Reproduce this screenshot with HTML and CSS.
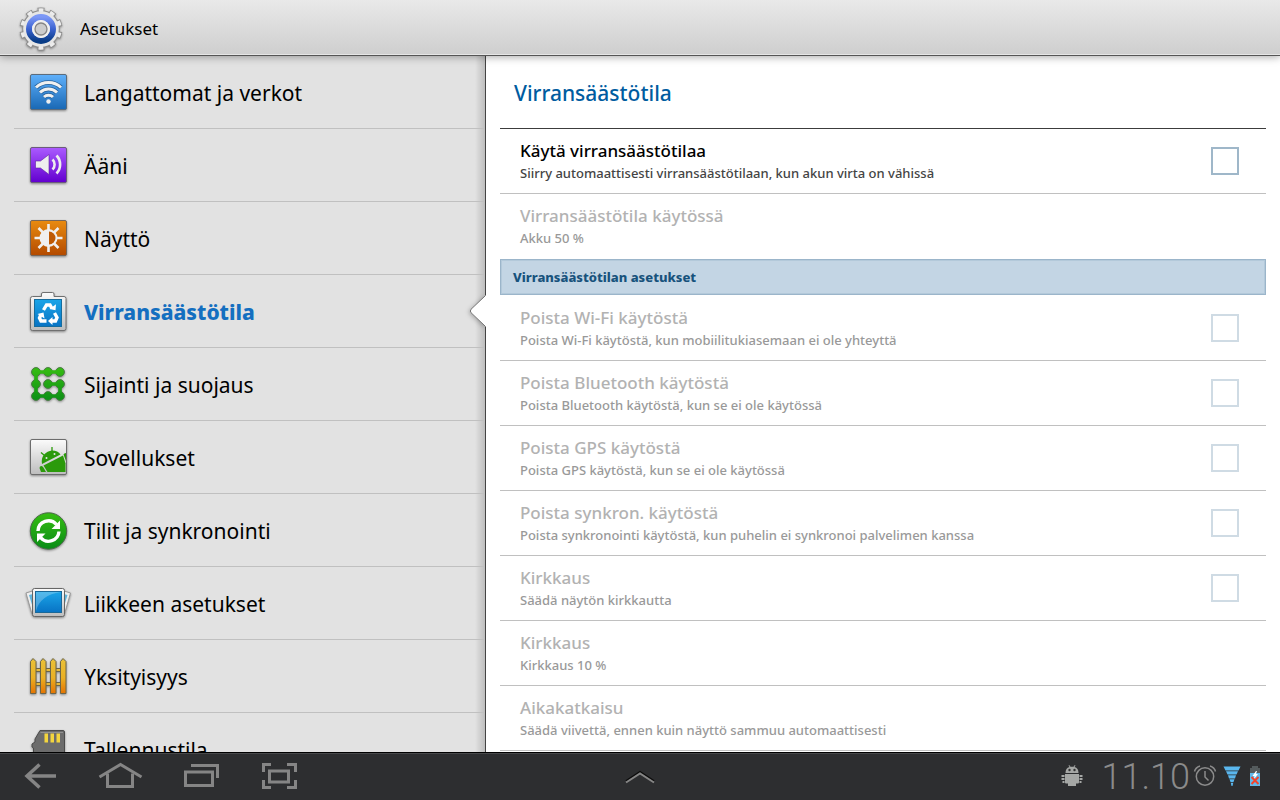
FILE: index.html
```
<!DOCTYPE html>
<html lang="fi">
<head>
  <meta charset="UTF-8" />
  <meta name="viewport" content="width=device-width, initial-scale=1.0"/>
  <title>Asetukset</title>
  <link rel="stylesheet" href="styles.css">
</head>
<body>

  <!-- Shared gradients -->
  <svg class="defs" width="0" height="0" aria-hidden="true">
    <defs>
      <linearGradient id="blue" x1="0" y1="0" x2="0" y2="1"><stop offset="0" stop-color="#5fb0fb"/><stop offset="1" stop-color="#1968b4"/></linearGradient>
      <linearGradient id="purple" x1="0" y1="0" x2="0" y2="1"><stop offset="0" stop-color="#ab5bff"/><stop offset="1" stop-color="#6200cf"/></linearGradient>
      <linearGradient id="orange" x1="0" y1="0" x2="0" y2="1"><stop offset="0" stop-color="#e98b10"/><stop offset="1" stop-color="#b34a00"/></linearGradient>
      <linearGradient id="green" gradientUnits="userSpaceOnUse" x1="0" y1="6" x2="0" y2="42"><stop offset="0" stop-color="#38bf12"/><stop offset="1" stop-color="#0a8d16"/></linearGradient>
      <linearGradient id="silver" x1="0" y1="0" x2="0" y2="1"><stop offset="0" stop-color="#fbfbfb"/><stop offset="1" stop-color="#bdbdbd"/></linearGradient>
      <linearGradient id="sky" x1="0" y1="0" x2="0" y2="1"><stop offset="0" stop-color="#1ba5e8"/><stop offset="1" stop-color="#0873c4"/></linearGradient>
      <linearGradient id="wood" gradientUnits="userSpaceOnUse" x1="0" y1="6" x2="0" y2="42"><stop offset="0" stop-color="#e9c23a"/><stop offset=".55" stop-color="#eab024"/><stop offset="1" stop-color="#e57200"/></linearGradient>
      <linearGradient id="ring" x1="0" y1="0" x2="0" y2="1"><stop offset="0" stop-color="#7c98f6"/><stop offset=".5" stop-color="#3b62d0"/><stop offset="1" stop-color="#083c86"/></linearGradient>
    </defs>
  </svg>

  <header class="topbar">
    <svg class="icon" viewBox="0 0 48 48" aria-hidden="true">
      <!-- ten teeth: dark outline first, light fill on top -->
      <g fill="none">
        <circle cx="24" cy="25" r="18.500" pathLength="20" stroke="#8c8c8c" stroke-width="6" stroke-dasharray="1.100 .9" transform="rotate(8.100 24 25)"/>
        <circle cx="24" cy="25" r="17.500" stroke="#8c8c8c" stroke-width="2.400"/>
        <circle cx="24" cy="25" r="18" pathLength="20" stroke="#ececec" stroke-width="5.400" stroke-dasharray=".8 1.200" transform="rotate(10.800 24 25)"/>
      </g>
      <circle cx="24" cy="25" r="17.800" fill="#e6e6e6"/>
      <circle cx="24" cy="25" r="12" fill="none" stroke="url(#ring)" stroke-width="6"/>
      <circle cx="24" cy="25" r="9" fill="#f0f0f0"/>
      <circle cx="24" cy="25" r="6" fill="#ccc" stroke="#858585" stroke-width="1.300"/>
    </svg>
    <h1>Asetukset</h1>
  </header>

  <main class="panes">
    <!-- Categories -->
    <nav class="sidebar">
      <a class="item" href="#">
        <svg class="icon" viewBox="0 0 48 48" aria-hidden="true">
          <rect x="6.500" y="6.500" width="36" height="35" rx="1.500" fill="url(#blue)" stroke="#5c6c7c"/>
          <g fill="none" stroke="#245f99" stroke-width="4.600"><path d="M12 19.500a18 18 0 0 1 25 0M16 24.500a12 12 0 0 1 17 0M20 29a6.500 6.500 0 0 1 9 0"/></g>
          <g fill="none" stroke="#f0f0f0" stroke-width="3"><path d="M12 19.500a18 18 0 0 1 25 0M16 24.500a12 12 0 0 1 17 0M20 29a6.500 6.500 0 0 1 9 0"/></g>
          <circle cx="24.500" cy="33.500" r="2.200" fill="#eee"/>
        </svg>
        <span>Langattomat ja verkot</span>
      </a>
      <a class="item" href="#">
        <svg class="icon" viewBox="0 0 48 48" aria-hidden="true">
          <rect x="6.500" y="6.500" width="36" height="35" rx="1.500" fill="url(#purple)" stroke="#6b5c7c"/>
          <path d="M11.500 20h5l8.500-6.500v20L16.500 27h-5z" fill="#eee" stroke="#5d20a0" stroke-width=".6"/>
          <g fill="none" stroke="#eee" stroke-width="2.600"><path d="M28.500 18.500a7 7 0 0 1 0 10M32.500 14.500a13 13 0 0 1 0 18"/></g>
        </svg>
        <span>Ääni</span>
      </a>
      <a class="item" href="#">
        <svg class="icon" viewBox="0 0 48 48" aria-hidden="true">
          <rect x="6.500" y="6.500" width="36" height="35" rx="1.500" fill="url(#orange)" stroke="#76665a"/>
          <path d="M24.500 10v28M10.500 24h28M14.500 14l20 20M34.500 14l-20 20" stroke="#f0f0f0" stroke-width="2.600"/>
          <circle cx="24.500" cy="24" r="9" fill="#f0f0f0"/>
          <path d="M25 17.500a6.500 6.500 0 0 1 0 13z" fill="#be5a05"/>
        </svg>
        <span>Näyttö</span>
      </a>
      <a class="item active" href="#" aria-current="page">
        <svg class="icon" viewBox="0 0 48 48" aria-hidden="true">
          <path d="M8.500 9.500h9V7q0-1.500 1.500-1.500h9.500Q30 5.500 30 7v2.500h10q2 0 2 2v30q0 2-2 2H8.500q-2 0-2-2v-30q0-2 2-2z" fill="url(#silver)" stroke="#707070"/>
          <rect x="10.500" y="12.500" width="27" height="27" fill="url(#sky)" stroke="#176d9d"/>
          <g fill="none" stroke="#fff" stroke-width="3.400">
            <path d="M19.500 23l3-5h3.500l2 3.500"/>
            <path d="M30.500 26l2.500 4.500-1.500 3.500H28"/>
            <path d="M22.500 34H17l-1.500-3 1.500-3.500"/>
          </g>
          <path d="M25.500 22l6 1.300.5-6zM28.500 30v8l-4.500-4zM13.500 27l6-1.500 1 6z" fill="#fff"/>
        </svg>
        <span>Virransäästötila</span>
        <svg class="pointer" viewBox="0 0 17 34" aria-hidden="true">
          <path d="M17 1L2 15q-1.500 2 0 4l15 14z" fill="#fff"/>
          <path d="M16.500 1.500L2 15.300q-1.300 1.700 0 3.400l14.500 13.800" fill="none" stroke="#707070"/>
        </svg>
      </a>
      <a class="item" href="#">
        <svg class="icon" viewBox="0 0 48 48" aria-hidden="true">
          <g fill="url(#green)" stroke="#4a7a45">
            <circle cx="12" cy="12" r="4.400"/><circle cx="24" cy="12" r="4.400"/><circle cx="36" cy="12" r="4.400"/>
            <circle cx="12" cy="24" r="4.400"/><circle cx="24" cy="24" r="4.400"/><circle cx="36" cy="24" r="4.400"/>
            <circle cx="12" cy="36" r="4.400"/><circle cx="24" cy="36" r="4.400"/><circle cx="36" cy="36" r="4.400"/>
          </g>
          <path d="M36 12H12v24h24V24H24" fill="none" stroke="url(#green)" stroke-width="3.600"/>
        </svg>
        <span>Sijainti ja suojaus</span>
      </a>
      <a class="item" href="#">
        <svg class="icon" viewBox="0 0 48 48" aria-hidden="true">
          <rect x="6.500" y="6.500" width="36" height="35" rx="1.500" fill="url(#silver)" stroke="#6c6c6c"/>
          <g fill="#2b9a0b">
            <path d="M18 31C16.500 23 22 18 28 17.500q6 0 8.500 4z"/>
            <path d="M19.500 32.500L39 22.500l2.500 8V39h-18z"/>
            <path d="M15.500 35q0-2 2-2 1.500 0 2.500 2.500l2 3.500h-5zM39.500 21.500q.5-1.500 2.500-1.500v8z"/>
          </g>
          <path d="M20.500 22.500L17 19.500M28 18v-4" stroke="#2b9a0b" stroke-width="1.300"/>
          <circle cx="22.500" cy="25" r="1" fill="#e4e4e4"/><circle cx="30.500" cy="21" r="1" fill="#e4e4e4"/>
        </svg>
        <span>Sovellukset</span>
      </a>
      <a class="item" href="#">
        <svg class="icon" viewBox="0 0 48 48" aria-hidden="true">
          <circle cx="24.500" cy="25" r="18.200" fill="url(#green)" stroke="#4b6a49"/>
          <g fill="none" stroke="#fff" stroke-width="3.400"><path d="M14 25a10.500 10.500 0 0 1 18.500-6.500M35 25.500a10.500 10.500 0 0 1-18.500 6"/></g>
          <path d="M36 14.500V23h-8.500zM13 36v-8.500h8.500z" fill="#fff"/>
        </svg>
        <span>Tilit ja synkronointi</span>
      </a>
      <a class="item" href="#">
        <svg class="icon" viewBox="0 0 48 48" aria-hidden="true">
          <path d="M2 14l8-2.500v23l-2 .5zM46.500 14l-8-2.500v23l2 .5z" fill="#eee" stroke="#999"/>
          <path d="M5 16l4-1v14zM43.500 16l-4-1v14z" fill="#62b5dc"/>
          <rect x="8.500" y="9.500" width="32" height="28" rx="2" fill="url(#silver)" stroke="#666"/>
          <rect x="11.500" y="12.500" width="26" height="21" fill="url(#sky)" stroke="#1a6898"/>
          <path d="M12 13h25q-21 3-25 19z" fill="#fff" opacity=".25"/>
        </svg>
        <span>Liikkeen asetukset</span>
      </a>
      <a class="item" href="#">
        <svg class="icon" viewBox="0 0 48 48" aria-hidden="true">
          <path d="M9 16.500h30v3H9zM9 30.500h30v3H9z" fill="#e6b93c" stroke="#6d6546"/>
          <g fill="url(#wood)" stroke="#6d6546">
            <path d="M6.500 9.500l2.500-3 3 3v32h-5.500zM16.500 9.500l2.500-3 3 3v32h-5.500zM26.500 9.500l2.500-3 3 3v32h-5.500zM36.500 9.500l2.500-3 3 3v32h-5.500z"/>
          </g>
        </svg>
        <span>Yksityisyys</span>
      </a>
      <a class="item" href="#">
        <svg class="icon" viewBox="0 0 48 48" aria-hidden="true">
          <path d="M16 5.500h23q1.500 0 1.500 1.500v35h-31V23l-1.500-1v-3l3-2v-3z" fill="#6c6c6c" stroke="#4b4b4b"/>
          <path d="M16.500 7.500H39" stroke="#919191"/>
          <path d="M20.500 8.500h3.500v9h-3.500zM26.500 8.500H30v9h-3.500zM32.500 8.500H36v9h-3.500z" fill="#f3d53e"/>
        </svg>
        <span>Tallennustila</span>
      </a>
    </nav>

    <!-- Power saving settings -->
    <section class="detail">
      <h2>Virransäästötila</h2>
      <label class="row">
        <span class="text"><span class="name">Käytä virransäästötilaa</span><span class="info">Siirry automaattisesti virransäästötilaan, kun akun virta on vähissä</span></span>
        <input type="checkbox">
      </label>
      <button class="row disabled last" disabled>
        <span class="text"><span class="name">Virransäästötila käytössä</span><span class="info">Akku 50 %</span></span>
      </button>

      <h3>Virransäästötilan asetukset</h3>
      <label class="row disabled">
        <span class="text"><span class="name">Poista Wi-Fi käytöstä</span><span class="info">Poista Wi-Fi käytöstä, kun mobiilitukiasemaan ei ole yhteyttä</span></span>
        <input type="checkbox" disabled>
      </label>
      <label class="row disabled">
        <span class="text"><span class="name">Poista Bluetooth käytöstä</span><span class="info">Poista Bluetooth käytöstä, kun se ei ole käytössä</span></span>
        <input type="checkbox" disabled>
      </label>
      <label class="row disabled">
        <span class="text"><span class="name">Poista GPS käytöstä</span><span class="info">Poista GPS käytöstä, kun se ei ole käytössä</span></span>
        <input type="checkbox" disabled>
      </label>
      <label class="row disabled">
        <span class="text"><span class="name">Poista synkron. käytöstä</span><span class="info">Poista synkronointi käytöstä, kun puhelin ei synkronoi palvelimen kanssa</span></span>
        <input type="checkbox" disabled>
      </label>
      <label class="row disabled">
        <span class="text"><span class="name">Kirkkaus</span><span class="info">Säädä näytön kirkkautta</span></span>
        <input type="checkbox" disabled>
      </label>
      <button class="row disabled" disabled>
        <span class="text"><span class="name">Kirkkaus</span><span class="info">Kirkkaus 10 %</span></span>
      </button>
      <button class="row disabled" disabled>
        <span class="text"><span class="name">Aikakatkaisu</span><span class="info">Säädä viivettä, ennen kuin näyttö sammuu automaattisesti</span></span>
      </button>
    </section>
  </main>

  <!-- System bar -->
  <footer class="sysbar">
    <div class="keys">
      <button aria-label="Takaisin">
        <svg width="48" height="32" viewBox="0 0 48 32"><path d="M40 16H11M23.500 4.500L11 16l12.500 11.500" fill="none" stroke="#858585" stroke-width="3.500"/></svg>
      </button>
      <button aria-label="Koti">
        <svg width="48" height="32" viewBox="0 0 48 32" fill="none" stroke="#858585" stroke-width="3"><path d="M3.500 17L24.500 4.500l21 12.500"/><path d="M11.500 13.500v13h25v-13"/></svg>
      </button>
      <button aria-label="Viimeisimmät">
        <svg width="48" height="32" viewBox="0 0 48 32" fill="none" stroke="#858585" stroke-width="3"><path d="M9.500 12h27v13.500h-27z"/><path d="M15 5.500h26.500V18"/></svg>
      </button>
      <button aria-label="Kuvakaappaus">
        <svg width="48" height="32" viewBox="0 0 48 32" fill="none" stroke="#858585" stroke-width="3"><path d="M13.500 11h19v11h-19zM7.500 12V4.500H15M31 4.500h8.500V12M7.500 20v7.500H15M31 27.500h8.500V20"/></svg>
      </button>
    </div>
    <button class="drawer" aria-label="Sovellukset">
      <svg width="32" height="20" viewBox="0 0 32 20"><path d="M2 15L16 6l14 9" fill="none" stroke="#0c0c0c" stroke-width="2"/><path d="M2 16.500L16 7.500l14 9" fill="none" stroke="#868686" stroke-width="2"/></svg>
    </button>
    <div class="status">
      <svg class="droid" width="22" height="22" viewBox="0 0 22 22" fill="#a5a7a5" aria-hidden="true">
        <path d="M4.500 8q0-5 4-6l-1-1.500.7-.5 1.300 1.700h3L13.800 0l.7.500-1 1.500q4 1 4 6zM4 9h14v8.500q0 1-1 1h-2V21H7v-2.500H5q-1 0-1-1zM.5 10h3v2h-3zM.5 13h3v2h-3zM1.500 16h2v2h-2zM18.500 10h3v2h-3zM18.500 13h3v2h-3zM18.500 16h2v2h-2z"/>
        <circle cx="8.500" cy="5" r="1.200" fill="#333"/><circle cx="13.500" cy="5" r="1.200" fill="#333"/>
      </svg>
      <time>11.10</time>
      <svg width="24" height="24" viewBox="0 0 24 24" fill="none" stroke="#8b8b8b" stroke-width="1.500" aria-hidden="true">
        <circle cx="12" cy="12.500" r="8.700"/><path d="M12 7v6l3.500 3.500M1.500 7.500q1-4 5.500-5.500M22.500 7.500q-1-4-5.500-5.500"/>
      </svg>
      <svg class="wifi" width="18" height="22" viewBox="0 0 18 22" fill="#5ab7ee" aria-hidden="true">
        <path d="M.5 1.500h17L15.500 5.500h-13zM3 6.200h12L13.500 9.500h-9zM5 10.200h8L12 13.500H6zM6.500 14.200h5L10.500 17h-3zM7.700 17.700h2.600L9.500 21h-1z"/>
      </svg>
      <svg width="12" height="22" viewBox="0 0 12 22" aria-hidden="true">
        <path d="M1 3h2V1h6v2h2v5H1z" fill="#545b5d"/><path d="M1 8h10v13H1z" fill="#62b9ea"/>
        <path d="M7 6L3.500 11h2L5 14l4-5H7l1-3z" fill="#fff"/>
        <path d="M2.500 12l7 7M9.500 12l-7 7" stroke="#f4432a" stroke-width="2"/>
      </svg>
    </div>
  </footer>

</body>
</html>
```
FILE: styles.css
```
* {
  box-sizing: border-box;
}

body {
  font-family: "Noto Sans", "Open Sans", sans-serif;
  margin: 0;
  height: 100vh;
  display: flex;
  flex-direction: column;
  overflow: hidden;
  color: #000;
  background: #fff;
}

h1, h2, h3 {
  margin: 0;
}

button {
  font-family: inherit;
  background: none;
  border: none;
  padding: 0;
}

svg {
  display: block;
  flex: none;
}

.defs {
  position: absolute;
}

.icon {
  width: 48px;
  height: 48px;
  filter: drop-shadow(0 1px 1px rgba(0,0,0,0.4));
}

/* Top bar */
.topbar {
  display: flex;
  align-items: center;
  gap: 15px;
  flex: none;
  height: 56px;
  padding: 1px 17px 0;
  background: linear-gradient(#e9e9e9, #cecece);
  border-bottom: 1px solid #555;
  box-shadow: inset 0 -1px #e6e6e6, 0 1px 8px rgba(0,0,0,0.35);
  position: relative;
  z-index: 2;
}

.topbar h1 {
  font-size: 17px;
  font-weight: 400;
}

.panes {
  display: grid;
  grid-template-columns: 486px 1fr;
  flex: 1;
  min-height: 0;
}

/* Sidebar */
.sidebar {
  min-height: 0;
  padding-left: 14px;
  background: #e2e2e2 linear-gradient(to left, rgba(0,0,0,0.16), transparent 10px);
  border-right: 1px solid #444;
  clip-path: inset(0);
}

.item {
  display: flex;
  align-items: center;
  gap: 12px;
  height: 73px;
  padding-left: 10px;
  border-bottom: 1px solid #c0c0c0;
  color: #000;
  font-size: 21px;
  text-decoration: none;
  position: relative;
}

.item span {
  padding-top: 2px;
}

.active {
  color: #146fc0;
  font-weight: 800;
}

.pointer {
  position: absolute;
  right: -1px;
  width: 17px;
  height: 34px;
  filter: drop-shadow(-1px 1px 2px rgba(0,0,0,0.25));
}

/* Settings list */
.detail {
  min-height: 0;
  overflow: hidden;
  padding: 0 14px;
}

.detail h2 {
  height: 73px;
  padding-left: 14px;
  border-bottom: 1px solid #3c3c3c;
  color: #005c9f;
  font-size: 21px;
  font-weight: 500;
  line-height: 74px;
}

.detail h3 {
  height: 36px;
  margin-bottom: 1px;
  padding-left: 12px;
  background: #c3d5e4;
  border: 1px solid #9bb5ca;
  box-shadow: inset 0 0 0 1px #b3c9da;
  color: #17527c;
  font-size: 13px;
  font-weight: 800;
  line-height: 34px;
}

.row {
  display: flex;
  align-items: center;
  justify-content: space-between;
  width: 100%;
  height: 65px;
  padding: 0 27px 0 20px;
  border-bottom: 1px solid #c0c0c0;
  text-align: left;
}

.last {
  border-bottom-color: transparent;
}

.text {
  padding-top: 2px;
}

.name, .info {
  display: block;
  font-weight: 500;
  line-height: 22px;
}

.name {
  color: #000;
  font-size: 17px;
}

.info {
  color: #444;
  font-size: 13px;
}

.disabled .name {
  color: #b2b2b2;
}

.disabled .info {
  color: #999;
}

.row input {
  appearance: none;
  width: 28px;
  height: 28px;
  margin: 0;
  border: 2px solid #9fb7c9;
}

.disabled input {
  border-color: #cfdbe4;
}

/* System bar */
.sysbar {
  display: grid;
  grid-template-columns: 1fr auto 1fr;
  align-items: center;
  flex: none;
  height: 48px;
  padding-bottom: 2px;
  background: #2d2e30;
  border-top: 1px solid #000;
  box-shadow: inset 0 1px #48494b;
}

.keys {
  display: flex;
}

.keys button {
  display: flex;
  justify-content: center;
  width: 80px;
}

.status {
  display: flex;
  align-items: center;
  justify-content: flex-end;
  gap: 3px;
  padding-right: 19px;
}

.droid {
  margin-right: 16px;
}

.status time {
  padding-top: 2px;
  color: #8b8b8b;
  font-family: Roboto, sans-serif;
  font-size: 36px;
  font-weight: 300;
  line-height: 42px;
}

.wifi {
  margin: 0 5px 0 3px;
}
```
